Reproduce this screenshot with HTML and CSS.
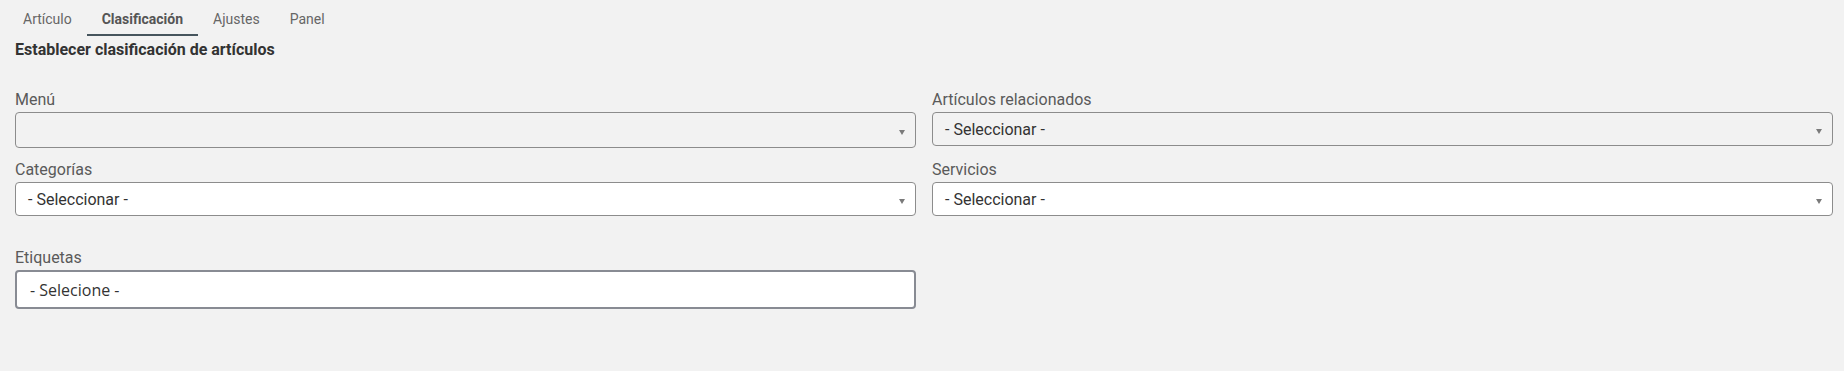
FILE: index.html
```html
<!DOCTYPE html>
<html>

<head>
    <title>Clasificación</title>
    <link rel="stylesheet" href="styles.css">
</head>

<body>
    <ul class="tabs">
        <li class="tab">Artículo</li>
        <li class="tab active">Clasificación</li>
        <li class="tab">Ajustes</li>
        <li class="tab">Panel</li>
    </ul>

    <h3 class="title">Establecer clasificación de artículos</h3>

    <div class="form_grid">
        <div class="field">
            <label class="field_label">Menú</label>
            <div class="select_box grey empty">
                <span class="arrow"></span>
            </div>
        </div>
        <div class="field">
            <label class="field_label">Artículos relacionados</label>
            <div class="select_box grey">
                <span class="select_text">- Seleccionar -</span>
                <span class="arrow"></span>
            </div>
        </div>
        <div class="field">
            <label class="field_label">Categorías</label>
            <div class="select_box">
                <span class="select_text">- Seleccionar -</span>
                <span class="arrow"></span>
            </div>
        </div>
        <div class="field">
            <label class="field_label">Servicios</label>
            <div class="select_box">
                <span class="select_text">- Seleccionar -</span>
                <span class="arrow"></span>
            </div>
        </div>
        <div class="field tags">
            <label class="field_label">Etiquetas</label>
            <div class="tag_box">- Selecione -</div>
        </div>
    </div>
</body>

</html>
```

FILE: styles.css
```css
body {
    margin: 0;
    padding: 0 11px 0 15px;
    background-color: #f2f2f2;
    font-family: Roboto, "Liberation Sans", sans-serif;
    color: #333;
}

.tabs {
    display: flex;
    list-style: none;
    margin: 0 0 0 -7px;
    padding: 0;
}

.tab {
    font-size: 14px;
    line-height: 18px;
    padding: 10px 15px 6px;
    color: #666;
    border-bottom: 2px solid transparent;
}

.tab.active {
    font-weight: bold;
    color: #555;
    border-bottom-color: #46555d;
}

.title {
    font-size: 16px;
    font-weight: bold;
    line-height: 20px;
    margin: 4px 0 0 0;
    color: #333;
}

.form_grid {
    display: grid;
    grid-template-columns: 1fr 1fr;
    column-gap: 16px;
    row-gap: 12px;
    margin-top: 30px;
}

.field {
    display: flex;
    flex-direction: column;
}

.field_label {
    font-size: 16px;
    line-height: 20px;
    color: #5a5a5a;
    margin-bottom: 2px;
}

.select_box {
    position: relative;
    display: flex;
    align-items: center;
    height: 32px;
    border: 1px solid #8c8c8c;
    border-radius: 4px;
    background-color: #fff;
    padding: 0 12px;
}

.select_box.grey {
    background-color: #f2f2f2;
}

.select_box.empty {
    height: 34px;
}

.select_text {
    font-size: 16px;
    color: #333;
}

.arrow {
    position: absolute;
    right: 10px;
    top: 50%;
    margin-top: 0;
    width: 0;
    height: 0;
    border-left: 3.5px solid transparent;
    border-right: 3.5px solid transparent;
    border-top: 5px solid #7a7a7a;
}

.tags {
    margin-top: 20px;
}

.tag_box {
    height: 35px;
    border: 2px solid #888b93;
    border-radius: 4px;
    background-color: #fff;
    padding: 0 13px;
    display: flex;
    align-items: center;
    font-family: "Open Sans", Roboto, sans-serif;
    font-size: 16px;
    color: #333;
}
```
